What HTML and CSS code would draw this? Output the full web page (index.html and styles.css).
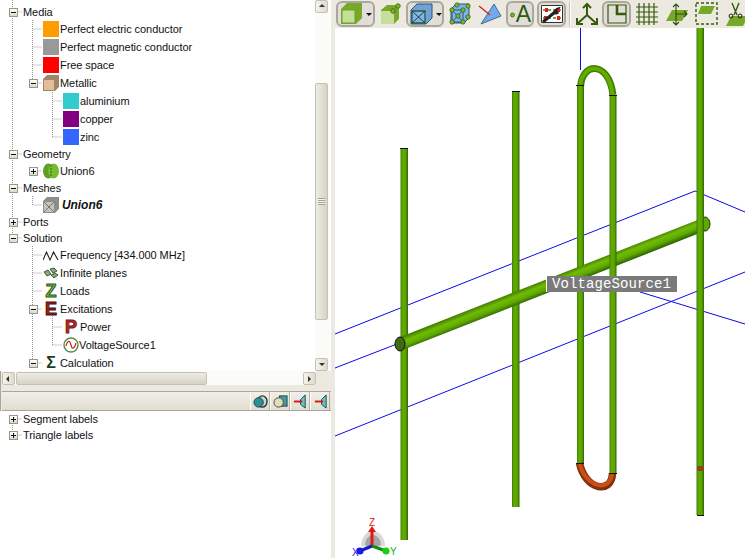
FILE: index.html
```html
<!DOCTYPE html>
<html lang="en">
<head>
  <meta charset="UTF-8">
  <title>Model tree</title>
  <link rel="stylesheet" href="styles.css">
</head>
<body>
  <aside class="side">
    <div class="tree-pane">
      <div class="tree">
        <svg class="guides" width="316" height="370">
          <path d="M12.500 0V238M12.500 12H22M12.500 154H22M12.500 188H22M12.500 222H22M12.500 238H22
                   M32.500 20V83M32.500 29H42M32.500 47H42M32.500 65H42M32.500 83H42M32.500 171H42M32.500 196V205H42
                   M32.500 246V363M32.500 255H42M32.500 273H42M32.500 291H42M32.500 309H42M32.500 363H42
                   M52.500 90V137M52.500 101H62M52.500 119H62M52.500 137H62M52.500 316V345M52.500 327H62M52.500 345H62"/>
        </svg>
        <div class="row root"><span class="box minus"></span><span>Media</span></div>
        <div class="row leaf"><span class="icon swatch orange"></span><span>Perfect electric conductor</span></div>
        <div class="row leaf"><span class="icon swatch gray"></span><span>Perfect magnetic conductor</span></div>
        <div class="row leaf"><span class="icon swatch red"></span><span>Free space</span></div>
        <div class="row branch"><span class="box minus"></span>
          <svg class="icon" viewBox="0 0 16 16"><path d="M0 4L4 0H16V12L12 16H0Z" fill="#a08668"/><path d="M1 5H11V15H1Z" fill="#e2bd98"/></svg>
          <span>Metallic</span></div>
        <div class="row sub"><span class="icon swatch teal"></span><span>aluminium</span></div>
        <div class="row sub"><span class="icon swatch purple"></span><span>copper</span></div>
        <div class="row sub"><span class="icon swatch blue"></span><span>zinc</span></div>
        <div class="row root"><span class="box minus"></span><span>Geometry</span></div>
        <div class="row branch"><span class="box plus"></span>
          <svg class="icon" viewBox="0 0 16 16"><ellipse cx="5.500" cy="8" rx="5.500" ry="7.500" fill="#5f9e22"/><ellipse cx="10.500" cy="8" rx="5.500" ry="7.500" fill="#76bb30"/><path d="M8 2V14" stroke="#2f6a10" stroke-dasharray="2 1"/></svg>
          <span>Union6</span></div>
        <div class="row root"><span class="box minus"></span><span>Meshes</span></div>
        <div class="row leaf"><svg class="icon" viewBox="0 0 16 16"><path d="M0 4L4 0H16V12L12 16H0Z" fill="#8e8e86"/><path d="M1 5H11V15H1Z" fill="#c4c4bc"/><path d="M1 5L11 15M11 5L1 15" stroke="#77776f"/></svg>
          <span class="mesh-name">Union6</span></div>
        <div class="row root"><span class="box plus"></span><span>Ports</span></div>
        <div class="row root"><span class="box minus"></span><span>Solution</span></div>
        <div class="row leaf"><svg class="icon" viewBox="0 0 16 16"><path d="M0 13L3.500 5L7 13L10.500 5L15 13" fill="none" stroke="#222" stroke-width="1.100"/></svg>
          <span>Frequency [434.000 MHz]</span></div>
        <div class="row leaf"><svg class="icon" viewBox="0 0 16 16"><path d="M1 7L5 5L8 9L4 11ZM7 4L11 3L14 6L10 8ZM8 10L12 8L15 10L11 13Z" fill="#8aa878" stroke="#1f3d1f" stroke-width=".8"/></svg>
          <span>Infinite planes</span></div>
        <div class="row leaf"><span class="icon glyph glyph-z">Z</span><span>Loads</span></div>
        <div class="row branch"><span class="box minus"></span><span class="icon glyph glyph-e">E</span><span>Excitations</span></div>
        <div class="row sub"><span class="icon glyph glyph-p">P</span><span>Power</span></div>
        <div class="row sub tight"><svg class="icon" viewBox="0 0 16 16"><circle cx="8" cy="8" r="7" fill="#fff" stroke="#4f8f3f" stroke-width="1.400"/><path d="M3 9C5 2 7 4 8 8S11 13 13 6" fill="none" stroke="#c22" stroke-width="1.200"/></svg>
          <span>VoltageSource1</span></div>
        <div class="row branch last"><span class="box minus"></span><span class="icon glyph glyph-s">Σ</span><span>Calculation</span></div>
      </div>
      <div class="vscroll">
        <div class="sb-btn up"></div>
        <div class="sb-track-top"></div>
        <div class="sb-thumb-v"><span class="grip"></span></div>
        <div class="sb-track-bottom"></div>
        <div class="sb-btn down"></div>
      </div>
    </div>
    <div class="hscroll">
      <div class="sb-btn left"></div>
      <div class="sb-thumb-h"></div>
      <div class="sb-track-h"></div>
      <div class="sb-btn right"></div>
    </div>
    <div class="lower-pane">
      <div class="lower-bar">
        <div class="mini"><svg viewBox="0 0 16 16" width="15" height="15"><ellipse cx="10" cy="8" rx="5" ry="6" fill="#c8d8d0" stroke="#333" stroke-width="1.500"/><ellipse cx="6" cy="9" rx="5" ry="5" fill="#2f8f96" stroke="#244"/></svg></div>
        <div class="mini"><svg viewBox="0 0 16 16" width="15" height="15"><rect x="7" y="2" width="8" height="11" fill="#3f9ca3" stroke="#244"/><ellipse cx="6" cy="9" rx="5" ry="5" fill="#e6dcb8" stroke="#444"/></svg></div>
        <div class="mini"><svg viewBox="0 0 16 16" width="15" height="15"><path d="M13 1V15L8 11V6Z" fill="#5fc6cc" stroke="#244"/><path d="M1 8H10" stroke="#d11" stroke-width="2"/></svg></div>
        <div class="mini"><svg viewBox="0 0 16 16" width="15" height="15"><path d="M14 1V15L9 11V6Z" fill="#5fc6cc" stroke="#244"/><path d="M2 8H11" stroke="#d11" stroke-width="2"/></svg></div>
      </div>
      <div class="tree lower-tree">
        <svg class="guides" width="316" height="40"><path d="M12.500 8V24M12.500 8H22M12.500 24H22"/></svg>
        <div class="row root"><span class="box plus"></span><span>Segment labels</span></div>
        <div class="row root"><span class="box plus"></span><span>Triangle labels</span></div>
      </div>
    </div>
  </aside>

  <main class="view">
    <div class="toolbar">
      <div class="tool pressed w39">
        <svg width="24" height="24" viewBox="0 0 24 24"><path d="M2 7L8 1H23V16L17 22H2Z" fill="#78a82a"/><path d="M3 8H16V21H3Z" fill="#c6df98" stroke="#6f9f26"/></svg><span class="caret"></span>
      </div>
      <div class="tool w25">
        <svg width="24" height="24" viewBox="0 0 24 24"><path d="M2 8L8 3H20V17L15 22H2Z" fill="#78a82a"/><path d="M2 9H15V22H2Z" fill="#c6df98"/><circle cx="19" cy="4" r="2.300" fill="#7db52c" stroke="#2b5a0a" stroke-width=".7"/><circle cx="14" cy="9" r="2.300" fill="#7db52c" stroke="#2b5a0a" stroke-width=".7"/></svg>
      </div>
      <div class="tool pressed w38">
        <svg width="24" height="24" viewBox="0 0 24 24"><path d="M2 8L8 2H23V16L17 22H2Z" fill="#6fa3d8" stroke="#26557a"/><path d="M3 9H16V21H3Z" fill="#80b4ee" stroke="#2c5a3a" stroke-width="1.300"/><path d="M3 9L16 21M16 9L3 21" stroke="#1f3f2a"/></svg><span class="caret"></span>
      </div>
      <div class="tool w26">
        <svg width="24" height="24" viewBox="0 0 24 24"><path d="M3 7L8 2H21V16L16 21H3Z" fill="#80b4ee" stroke="#26557a"/><path d="M4 8L15 20M15 8L4 20M4 8H15V20H4Z" fill="none" stroke="#26557a"/><g fill="#7db52c" stroke="#2b5a0a" stroke-width=".7"><circle cx="4" cy="8" r="2.200"/><circle cx="9" cy="3" r="2.200"/><circle cx="20" cy="4" r="2.200"/><circle cx="15" cy="8" r="2.200"/><circle cx="4" cy="20" r="2.200"/><circle cx="15" cy="20" r="2.200"/><circle cx="20" cy="15" r="2.200"/><circle cx="10" cy="14" r="2.200"/></g></svg>
      </div>
      <div class="tool w27">
        <svg width="24" height="24" viewBox="0 0 24 24"><path d="M16 2L23 14L3 22Z" fill="#74a8ec" stroke="#3f6f90"/><path d="M1 4L12 13" stroke="#d42020" stroke-width="1.300"/></svg>
      </div>
      <div class="tool pressed w28">
        <svg class="tool-dot" width="5" height="24" viewBox="0 0 5 24"><circle cx="2.500" cy="13" r="2" fill="#7db52c" stroke="#2b5a0a" stroke-width=".7"/></svg><span class="tool-letter">A</span>
      </div>
      <div class="tool pressed w29">
        <svg width="24" height="22" viewBox="0 0 24 22"><path d="M1.500 2.500H22.500V19.500H1.500Z" fill="#fff" stroke="#333"/><path d="M3 7H21M3 15H21" stroke="#74a83a" stroke-width="2" stroke-dasharray="3 2"/><path d="M5 5h3v4h-3zM17 5h3v4h-3zM4 13h3v4h-3zM17 13h3v4h-3z" fill="#d42020"/><path d="M3 19L15 9" stroke="#222" stroke-width="3"/><path d="M13 10C14 6 17 4 21 4L17 7L19 10C17 12 15 12 13 10Z" fill="#222"/></svg>
      </div>
      <span class="sep"></span>
      <div class="tool w25">
        <svg width="24" height="24" viewBox="0 0 24 24"><path d="M12 13V2M8 6L12 2L16 6M12 13L2 22M2 16V22H8M12 13L22 22M22 16V22H16" fill="none" stroke="#355c0d" stroke-width="2"/></svg>
      </div>
      <div class="tool pressed w29">
        <svg width="22" height="22" viewBox="0 0 22 22"><path d="M2 2H20V20H2Z" fill="none" stroke="#355c0d" stroke-width="1.200"/><path d="M11 2V11H20" fill="none" stroke="#355c0d" stroke-width="2.600"/></svg>
      </div>
      <div class="tool w26">
        <svg width="24" height="24" viewBox="0 0 24 24"><path d="M1 5H23M1 10H23M1 15H23M1 20H23M4 1V23M9 1V23M14 1V23M19 1V23" stroke="#355c0d" stroke-width="1.200"/></svg>
      </div>
      <div class="tool w27">
        <svg width="24" height="24" viewBox="0 0 24 24"><path d="M7 8H23L17 19H1Z" fill="#78a82a"/><path d="M11 2V23M8 5L11 2L14 5M8 20L11 23L14 20M11 12H22M19 9L22 12L19 15" fill="none" stroke="#2b4a0a" stroke-width="1.100"/></svg>
      </div>
      <div class="tool w27">
        <svg width="24" height="24" viewBox="0 0 24 24"><rect x="1" y="1" width="21" height="21" fill="none" stroke="#355c0d" stroke-width="1.400" stroke-dasharray="3 2"/><path d="M6 4H20L16 12H3Z" fill="#78a82a"/></svg>
      </div>
      <div class="tool w27">
        <svg width="24" height="24" viewBox="0 0 24 24"><path d="M6 14H23L18 24H1Z" fill="#78a82a"/><path d="M7 1L12 13M14 1L9 13" stroke="#355c0d" stroke-width="1.400"/><circle cx="6" cy="14" r="2" fill="none" stroke="#222"/><circle cx="15" cy="14" r="2" fill="none" stroke="#222"/></svg>
      </div>
    </div>

    <div class="scene">
      <svg class="model" viewBox="335 28 410 530" width="410" height="530">
        <defs>
          <linearGradient id="tube">
            <stop offset="0" stop-color="#417f04"/>
            <stop offset=".3" stop-color="#62ac00"/>
            <stop offset=".7" stop-color="#5ba200"/>
            <stop offset="1" stop-color="#2e6406"/>
          </linearGradient>
          <linearGradient id="boom" gradientUnits="userSpaceOnUse" x1="549.600" y1="278" x2="554.400" y2="290">
            <stop offset="0" stop-color="#457f04"/>
            <stop offset=".35" stop-color="#70bc04"/>
            <stop offset=".7" stop-color="#5fa802"/>
            <stop offset="1" stop-color="#336a06"/>
          </linearGradient>
        </defs>

        <g class="grid-lines">
          <path d="M335 334L695 191L745 212"/>
          <path d="M335 368L402 342"/>
          <path d="M335 436L745 272"/>
          <path d="M640 292L745 324"/>
          <path d="M580.500 28V70"/>
        </g>

        <rect x="400.500" y="148" width="7.500" height="392" fill="url(#tube)"/>
        <rect x="512" y="91" width="7.500" height="416" fill="url(#tube)"/>
        <rect x="577" y="85" width="7" height="183" fill="url(#tube)"/>
        <rect x="577" y="292" width="7" height="171" fill="url(#tube)"/>

        <path class="boom" d="M400 344L705 224"/>
        <ellipse cx="400" cy="344" rx="5" ry="7" fill="#3f6a14" stroke="#111"/>
        <ellipse cx="705" cy="224" rx="5" ry="7" fill="#5fa602" stroke="#1c3a08"/>

        <rect x="609.500" y="95" width="7" height="378" fill="url(#tube)"/>
        <rect x="696.500" y="28" width="7.500" height="487" fill="url(#tube)"/>
        <path d="M697 466h7v5h-7z" fill="#8a4a14"/>

        <path class="arc arc-dark" d="M580.500 88C581 62 609 60 613 95"/>
        <path class="arc arc-light" d="M580 88C581 62 609 60 612.500 95"/>
        <path class="arc copper-dark" d="M579.500 463C585 490 612 495 612.500 473"/>
        <path class="arc copper-light" d="M579.500 463C585 488 611 493 612 473"/>

        <g class="ticks">
          <path d="M400 148.500H408M512 91.500H520M576 85.500H584M609 95.500H617M576 463.500H584M609 473.500H617M697 515.500H704"/>
        </g>

        <!-- triad -->
        <path d="M361 546A12 15 0 0 1 385 546L372 548Z" fill="#d8d8d8"/>
        <path d="M365 545A8 10 0 0 1 381 545L372 548Z" fill="#a4a4a4"/>
        <path d="M372 546V530" stroke="#e01818" stroke-width="3"/>
        <path d="M368 532L372 526L376 532Z" fill="#e01818"/>
        <path d="M372 546L360 551" stroke="#1818c8" stroke-width="3"/>
        <circle cx="360" cy="551" r="3.500" fill="#1818e0"/>
        <path d="M372 546L386 551" stroke="#109010" stroke-width="3"/>
        <circle cx="386" cy="551" r="3.500" fill="#18d018"/>
        <text class="axis" x="369" y="526" fill="#e01818">Z</text>
        <text class="axis" x="352" y="556" fill="#1818e0">X</text>
        <text class="axis" x="390" y="555" fill="#18b018">Y</text>
      </svg>
      <div class="source-label">VoltageSource1</div>
    </div>
  </main>
</body>
</html>
```
FILE: styles.css
```css
* {
  box-sizing: border-box;
}

html, body {
  height: 100%;
}

body {
  margin: 0;
  display: flex;
  overflow: hidden;
  background-color: #ece9e0;
  color: #111;
  font-family: "Liberation Sans", Arial, sans-serif;
  font-size: 11px;
  letter-spacing: -.07px;
}

/* left column */
.side {
  width: 331px;
  height: 558px;
  display: flex;
  flex-direction: column;
  border-left: 1px solid #a8a79e;
  padding-left: 1px;
  flex: none;
}

.tree-pane {
  height: 371px;
  display: flex;
  background: white;
}

.tree {
  position: relative;
  flex: 1;
  padding-top: 4px;
  overflow: hidden;
  background: white;
  margin-left: -2px;
}

.guides {
  position: absolute;
  left: 0;
  top: 0;
}

.guides path {
  fill: none;
  stroke: #9a9a9a;
  stroke-dasharray: 1 1;
}

.row {
  position: relative;
  display: flex;
  align-items: center;
  white-space: nowrap;
}

.row.root {
  height: 16px;
  padding-left: 9px;
}

.row.root .box {
  margin-right: 5px;
}

.row.leaf {
  height: 18px;
  padding-left: 43px;
}

.row.branch {
  height: 18px;
  padding-left: 29px;
}

.row.branch .box {
  margin-right: 5px;
}

.row.branch.last {
  height: 17px;
  padding-top: 1px;
}

.row.sub {
  height: 18px;
  padding-left: 63px;
}

.icon {
  width: 16px;
  height: 16px;
  flex: none;
  margin-right: 1px;
}

.row.sub .icon {
  margin-right: 1px;
}

.row.sub.tight .icon {
  margin-right: 0;
}

.box {
  position: relative;
  width: 9px;
  height: 9px;
  flex: none;
  border: 1px solid #96968c;
  background: linear-gradient(#fff, #dcd8c8);
}

.box::before {
  content: "";
  position: absolute;
  left: 1px;
  top: 3px;
  width: 5px;
  height: 1px;
  background: #111;
}

.box.plus::after {
  content: "";
  position: absolute;
  left: 3px;
  top: 1px;
  width: 1px;
  height: 5px;
  background: #111;
}

.swatch.orange { background: #ff9c00; }
.swatch.gray { background: #999; }
.swatch.red { background: #f00; }
.swatch.teal { background: #33cccc; }
.swatch.purple { background: #800080; }
.swatch.blue { background: #3366ff; }

.mesh-name {
  margin-left: 2px;
  font-size: 12px;
  font-weight: bold;
  font-style: italic;
}

.glyph {
  display: flex;
  align-items: center;
  justify-content: center;
  font-weight: bold;
  font-size: 18px;
  line-height: 16px;
  -webkit-text-stroke: 1px #222;
}

.glyph-z { color: #7cc043; -webkit-text-stroke-color: #2b5a14; }
.glyph-e { color: #c01818; -webkit-text-stroke-color: #3a1010; }
.glyph-p { color: #d02020; -webkit-text-stroke-color: #702020; }
.glyph-s { color: #1c3a1c; -webkit-text-stroke-width: 0; font-size: 16px; }

/* scrollbars */
.vscroll {
  width: 15px;
  margin-right: 1px;
  display: flex;
  flex-direction: column;
  flex: none;
  background: #fbfbf8;
}

.sb-btn {
  position: relative;
  width: 13px;
  height: 13px;
  flex: none;
  border: 1px solid #c4c2b6;
  border-radius: 2px;
  background: linear-gradient(90deg, #f4f3ec, #dedbcc);
}

.sb-btn::after {
  content: "";
  position: absolute;
  left: 3px;
  top: 3px;
  width: 0;
  height: 0;
  border: 3px solid transparent;
}

.sb-btn.up::after { border-bottom-color: #333; top: 0; }
.sb-btn.down::after { border-top-color: #333; top: 4px; }
.sb-btn.left::after { border-right-color: #333; left: 0; }
.sb-btn.right::after { border-left-color: #333; left: 4px; }

.sb-track-top {
  height: 70px;
  flex: none;
}

.sb-thumb-v {
  height: 237px;
  flex: none;
  width: 13px;
  display: flex;
  align-items: center;
  justify-content: center;
  border: 1px solid #c4c2b6;
  border-radius: 2px;
  background: linear-gradient(90deg, #eeece2, #d6d3c5);
}

.grip {
  width: 7px;
  height: 7px;
  background: repeating-linear-gradient(#a5a396 0 1px, #f4f3ec 1px 2px);
}

.sb-track-bottom {
  flex: 1;
}

.hscroll {
  height: 14px;
  display: flex;
  align-items: center;
  flex: none;
  width: 314px;
  background: #fbfbf8;
}

.sb-thumb-h {
  width: 191px;
  height: 13px;
  flex: none;
  margin-left: 1px;
  border: 1px solid #c4c2b6;
  border-radius: 2px;
  background: linear-gradient(#eeece2, #d6d3c5);
}

.sb-track-h {
  flex: 1;
}

.lower-pane {
  margin-top: 6px;
  flex: 1;
  display: flex;
  flex-direction: column;
  background: white;
  border-top: 1px solid #a8a79e;
}

.lower-bar {
  height: 19px;
  display: flex;
  justify-content: flex-end;
  flex: none;
  padding-right: 1px;
  background: linear-gradient(#f1efe8, #e0ddd0);
  border-bottom: 1px solid #a8a79e;
}

.mini {
  width: 20px;
  display: flex;
  align-items: center;
  justify-content: center;
  border-left: 1px solid #fff;
  border-right: 1px solid #b4b2a6;
}

.lower-tree {
  padding-top: 0;
}

/* viewer */
.view {
  margin-left: 4px;
  flex: 1;
  min-width: 0;
  height: 558px;
  display: flex;
  flex-direction: column;
}

.toolbar {
  height: 28px;
  flex: none;
  display: flex;
  align-items: center;
  gap: 3px;
  padding-left: 1px;
  overflow: hidden;
}

.tool {
  height: 26px;
  flex: none;
  display: flex;
  align-items: center;
  justify-content: center;
  gap: 3px;
}

.tool.pressed {
  border: 2px solid #a9a79e;
  border-radius: 6px;
  background: #e0ded6;
}

.w25 { width: 25px; }
.w26 { width: 26px; }
.w27 { width: 27px; }
.w28 { width: 28px; }
.w29 { width: 29px; }
.w38 { width: 38px; }
.w39 { width: 39px; }

.caret {
  width: 0;
  height: 0;
  border: 3px solid transparent;
  border-top-color: #111;
  margin-top: 3px;
}

.tool-dot {
  margin-left: 1px;
}

.tool-letter {
  color: #2c5a10;
  font-size: 23px;
  line-height: 24px;
  letter-spacing: 0;
  margin-left: -2px;
}

.sep {
  width: 2px;
  height: 24px;
  flex: none;
  border-left: 1px solid #c4c2b6;
  border-right: 1px solid #fff;
}

.scene {
  position: relative;
  flex: 1;
  overflow: hidden;
  background: white;
}

.model {
  display: block;
}

.grid-lines path {
  fill: none;
  stroke: #0a0ae6;
  stroke-width: 1;
}

.ticks path {
  fill: none;
  stroke: #111;
}

.boom {
  fill: none;
  stroke: url(#boom);
  stroke-width: 13;
}

.arc {
  fill: none;
}

.arc-dark { stroke: #417f04; stroke-width: 7; }
.arc-light { stroke: #62ac00; stroke-width: 4; }
.copper-dark { stroke: #7c3410; stroke-width: 7.5; }
.copper-light { stroke: #cf4c14; stroke-width: 4; }

.axis {
  font-family: "Liberation Sans", Arial, sans-serif;
  font-size: 10px;
}

.source-label {
  position: absolute;
  left: 211px;
  top: 248px;
  width: 131px;
  height: 16px;
  padding-left: 5px;
  background: #7a7a7a;
  color: white;
  border-left: 1px solid #fff;
  font-family: "Liberation Mono", monospace;
  font-size: 14px;
  letter-spacing: .1px;
  line-height: 16px;
  white-space: nowrap;
}
```
